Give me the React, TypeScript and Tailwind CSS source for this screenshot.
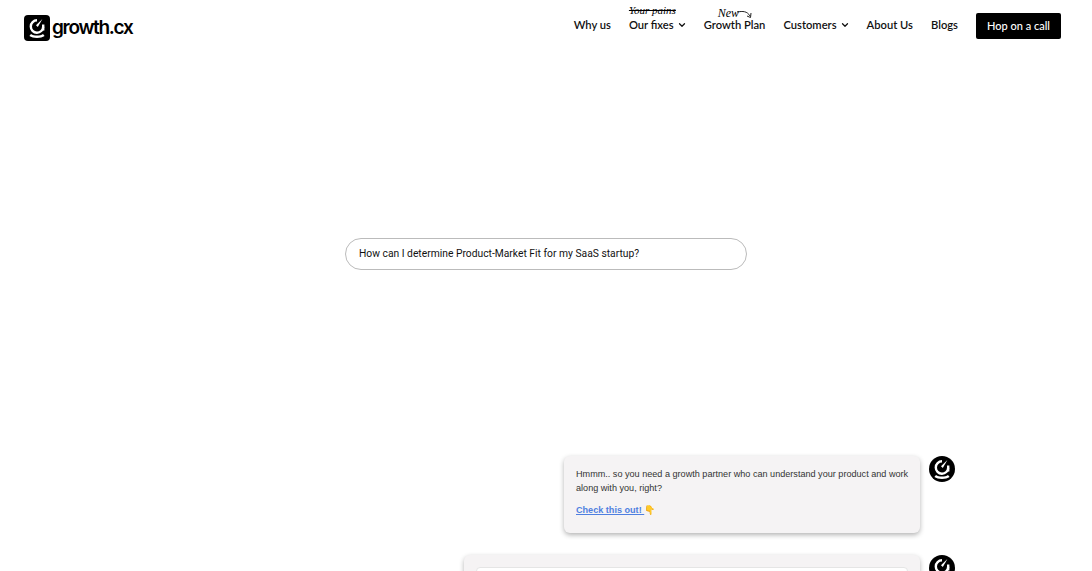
import { ChevronDown } from "lucide-react";

function LogoGlyph({ className }: { className: string }) {
  return (
    <svg viewBox="0 0 26 26" className={className} fill="none">
      <path d="M13 5.3a6.2 6.2 0 1 0 6.2 6.4" stroke="#fff" strokeWidth="2.4" />
      <path d="M18.4 4 12 10.2l1.8 1.9z" fill="#fff" />
      <path d="M18 9.5h2.4v6H18z" fill="#fff" />
      <path d="M7 19c1.5 1 3.5 1.5 6 1.5s4.5-.5 6-1.5l1.6 2c-1.9 1.3-4.5 2-7.6 2s-5.7-.7-7.6-2z" fill="#fff" />
    </svg>
  );
}

function NavLink({ label, caret }: { label: string; caret?: boolean }) {
  return (
    <a className="flex items-center gap-[3px] pb-[2px] text-[11.2px] font-semibold text-[#111]">
      {label}
      {caret && <ChevronDown size={10} strokeWidth={3} className="-mr-[1px]" />}
    </a>
  );
}

export default function App() {
  return (
    <div className="flex h-[571px] flex-col overflow-hidden bg-white font-['Lato',sans-serif]">
      {/* Header */}
      <header className="flex h-[52px] shrink-0 items-center justify-between pl-6 pr-[31px]">
        <div className="mt-1 flex items-center gap-[2px]">
          <div className="h-[26px] w-[26px] rounded-[4px] bg-black">
            <LogoGlyph className="h-[26px] w-[26px]" />
          </div>
          <span className="font-['Inter',sans-serif] text-[19px] font-semibold tracking-[-1.3px] text-black">growth.cx</span>
        </div>
        <nav className="flex items-center gap-[18px]">
          <NavLink label="Why us" />
          <div className="relative">
            <span className="absolute left-0 top-[-15px] whitespace-nowrap font-['Liberation_Serif',serif] text-[11px] italic text-black line-through">Your pains</span>
            <NavLink label="Our fixes" caret />
          </div>
          <div className="relative">
            <span className="absolute left-[14px] top-[-13px] font-['Liberation_Serif',serif] text-[12px] italic text-black">New</span>
            <svg viewBox="0 0 20 10" className="absolute left-[33px] top-[-7px] h-[10px] w-[20px]" fill="none" stroke="#222" strokeWidth="1">
              <path d="M0 2c6-1 10-1 13 4" />
              <path d="M10 6l3.5 1.5L14 3" />
            </svg>
            <NavLink label="Growth Plan" />
          </div>
          <NavLink label="Customers" caret />
          <NavLink label="About Us" />
          <NavLink label="Blogs" />
          <button className="h-[26px] w-[85px] rounded-[2px] bg-black text-[11px] font-medium text-white">Hop on a call</button>
        </nav>
      </header>

      {/* Question */}
      <div className="mt-[186px] flex justify-center">
        <div className="flex h-[32px] w-[402px] shrink-0 items-center rounded-full border border-[#bbb] pl-[13px] font-['Roboto',sans-serif] text-[10.3px] text-[#111]">
          How can I determine Product-Market Fit for my SaaS startup?
        </div>
      </div>

      {/* Chat */}
      <div className="mt-[186px] flex flex-col items-end gap-[22px] pr-[137px] font-['Liberation_Sans',sans-serif]">
        <div className="flex items-start gap-[9px]">
          <div className="h-[77px] w-[356px] rounded-[6px] bg-[#f5f3f4] pl-3 pr-2 pt-[11px] text-[9.1px] leading-[14px] text-[#333] shadow-[0_2px_5px_rgba(0,0,0,0.3)]">
            <p>Hmmm.. so you need a growth partner who can understand your product and work along with you, right?</p>
            <p className="mt-2">
              <a className="font-bold text-[#4f7fe0] underline">Check this out! </a>
              <span className="text-[#fcd34d]">👇</span>
            </p>
          </div>
          <div className="h-[26px] w-[26px] rounded-full bg-black">
            <LogoGlyph className="h-[26px] w-[26px]" />
          </div>
        </div>
        <div className="flex items-start gap-[9px]">
          <div className="h-[80px] w-[456px] shrink-0 rounded-[6px] bg-[#f5f3f4] px-3 pt-3 shadow-[0_2px_5px_rgba(0,0,0,0.3)]">
            <div className="h-[60px] rounded-[4px] border border-[#e5e5e5] bg-white" />
          </div>
          <div className="h-[26px] w-[26px] rounded-full bg-black">
            <LogoGlyph className="h-[26px] w-[26px]" />
          </div>
        </div>
      </div>
    </div>
  );
}
